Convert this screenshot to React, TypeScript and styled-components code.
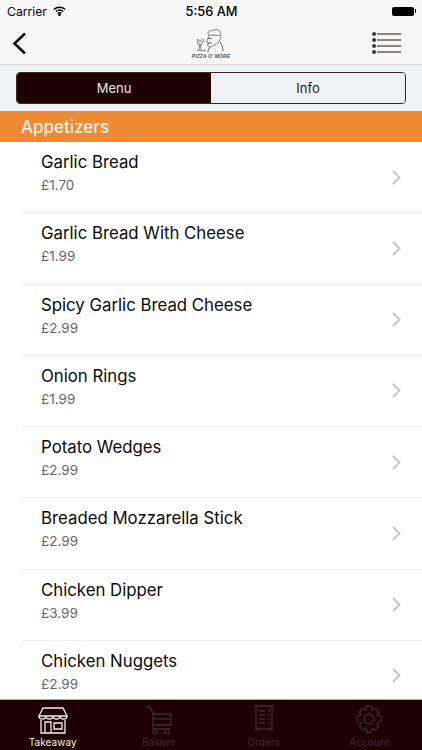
import styled, { createGlobalStyle } from 'styled-components';

const items = [
  { name: 'Garlic Bread', price: '£1.70' },
  { name: 'Garlic Bread With Cheese', price: '£1.99' },
  { name: 'Spicy Garlic Bread Cheese', price: '£2.99' },
  { name: 'Onion Rings', price: '£1.99' },
  { name: 'Potato Wedges', price: '£2.99' },
  { name: 'Breaded Mozzarella Stick', price: '£2.99' },
  { name: 'Chicken Dipper', price: '£3.99' },
  { name: 'Chicken Nuggets', price: '£2.99' },
];

const Global = createGlobalStyle`
  html, body { margin: 0; padding: 0; height: 100%; overflow: hidden; }
  body { font-family: Inter, "Liberation Sans", sans-serif; background: #fff; }
`;

const Page = styled.div`
  width: 422px;
  height: 750px;
  display: flex;
  flex-direction: column;
  overflow: hidden;
`;

const Header = styled.div`
  background: #f7f7f7;
  border-bottom: 1px solid #d9d9d9;
  height: 65px;
  box-sizing: border-box;
  flex-shrink: 0;
`;

const StatusBar = styled.div`
  height: 22px;
  display: grid;
  grid-template-columns: 1fr auto 1fr;
  align-items: center;
  padding: 0 6px 0 7px;
  color: #000;
`;

const Carrier = styled.div`
  display: flex;
  align-items: center;
  gap: 6px;
  font-size: 12.2px;
`;

const Clock = styled.div`
  font-size: 12.8px;
  font-weight: 500;
`;

const BatteryWrap = styled.div`
  display: flex;
  justify-content: flex-end;
  align-items: center;
`;

const Battery = styled.div`
  width: 22px;
  height: 9px;
  border-radius: 2px;
  background: #000;
`;

const BatteryTip = styled.div`
  width: 1.5px;
  height: 4px;
  background: #000;
  margin-left: 0.5px;
`;

const NavBar = styled.div`
  height: 42px;
  display: grid;
  grid-template-columns: 1fr auto 1fr;
  align-items: center;
  padding: 0 21px 0 12px;
`;

const NavEnd = styled.div`
  display: flex;
  justify-content: flex-end;
`;

const NavStart = styled.div`
  display: flex;
  justify-content: flex-start;
`;

const Logo = styled.div`
  display: flex;
  flex-direction: column;
  align-items: center;
  margin-left: 9px;
  margin-top: 1px;
`;

const LogoText = styled.div`
  font-family: "Liberation Sans", sans-serif;
  font-size: 5px;
  line-height: 6px;
  letter-spacing: 0.1px;
  font-style: italic;
  color: #555;
  font-weight: 700;
  white-space: nowrap;
`;

const SegmentArea = styled.div`
  height: 46px;
  background: #eff2f3;
  box-sizing: border-box;
  padding: 7px 16px 0 16px;
  flex-shrink: 0;
`;

const Segments = styled.div`
  height: 32px;
  box-sizing: border-box;
  display: grid;
  grid-template-columns: 194px 1fr;
  border: 1px solid #3a2426;
  border-radius: 4px;
  overflow: hidden;
`;

const Segment = styled.div<{ $active?: boolean }>`
  display: flex;
  align-items: center;
  justify-content: center;
  font-size: 13px;
  background: ${(p) => (p.$active ? '#1e0002' : '#eef1f3')};
  color: ${(p) => (p.$active ? '#e8e4e4' : '#2a1a1a')};
`;

const SectionHeader = styled.div`
  height: 31px;
  background: #ee8a33;
  color: #fdf3e8;
  font-size: 17px;
  font-weight: 500;
  display: flex;
  align-items: center;
  padding-left: 21px;
  flex-shrink: 0;
`;

const List = styled.div`
  flex: 1;
  min-height: 0;
  overflow: hidden;
  padding-left: 21px;
`;

const Row = styled.div`
  height: 71.25px;
  box-sizing: border-box;
  border-bottom: 1px solid #ececec;
  display: flex;
  align-items: center;
  justify-content: space-between;
  padding: 0 21px 0 20px;
`;

const RowText = styled.div`
  display: flex;
  flex-direction: column;
  gap: 4px;
  margin-top: -9px;
`;

const ItemName = styled.div`
  font-size: 16.8px;
  line-height: 21px;
  color: #0a0a0a;
`;

const ItemPrice = styled.div`
  font-size: 13.5px;
  line-height: 16px;
  color: #666;
`;

const TabBar = styled.div`
  height: 51px;
  background: #1e0002;
  border-top: 1px solid #b5b0b0;
  box-sizing: border-box;
  display: grid;
  grid-template-columns: repeat(4, 1fr);
  flex-shrink: 0;
`;

const Tab = styled.div<{ $active?: boolean }>`
  display: flex;
  flex-direction: column;
  align-items: center;
  padding-top: 5px;
  color: ${(p) => (p.$active ? '#f2eeee' : '#3f2c2d')};
`;

const TabIcon = styled.svg`
  width: 32px;
  height: 30px;
  margin-bottom: 1px;
  fill: none;
  stroke: currentColor;
  stroke-width: 1.3;
`;

const TabLabel = styled.div`
  font-size: 10px;
  line-height: 12px;
  letter-spacing: 0.05px;
`;

function ChefLogo() {
  return (
    <svg width="38" height="24" viewBox="0 0 38 24" fill="none" stroke="#4a4a4a" strokeWidth="0.7">
      <path d="M16 4c1-2 3-3 5-2.500 2-1.500 6-1 7 1 1.500 1.500.5 3.500-1.500 4l-8-.5c-1.500-.5-3-1-2.500-2z" />
      <path d="M17 6c-.5 2-1.500 4-2.500 7l2 1-1 2.500 3 1.500 4-2c3-1 6-4 6.500-10" />
      <path d="M16 9.500h3.500M16 14h4M18 18c-1 1-2 3-2 5M28 13c2 3 3 6 3 9" strokeWidth="0.9" />
      <path d="M5 10l1 5 2 1 2-1 2-5M7.500 16l-.5 5M8.500 16l.5 5M6 10l2 3M10 10l-2 3" />
      <path d="M5 21c3 1 6 1 9 0" />
    </svg>
  );
}

function MenuIcon() {
  return (
    <svg width="29" height="22" viewBox="0 0 29 22" fill="none">
      {[2, 8, 14, 20].map((y) => (
        <g key={y}>
          <rect x="0.6" y={y - 1.4} width="3" height="2.8" rx="0.6" fill="#3a2426" stroke="#3a2426" strokeWidth="0.5" />
          <line x1="5" y1={y} x2="29" y2={y} stroke="#3a2426" strokeWidth="1.1" />
        </g>
      ))}
    </svg>
  );
}

function Chevron() {
  return (
    <svg width="9" height="15" viewBox="0 0 9 15" fill="none">
      <path d="M1 1l6.500 6.500L1 14" stroke="#c4c4c8" strokeWidth="1.8" />
    </svg>
  );
}

export default function App() {
  return (
    <Page>
      <Global />
      <Header>
        <StatusBar>
          <Carrier>
            Carrier
            <svg width="13" height="10" viewBox="0 0 13 10" fill="none" stroke="#000" strokeWidth="1.4">
              <path d="M.8 3.500c3.300-3 8.100-3 11.400 0M2.800 5.600c2.200-2 5.200-2 7.400 0M4.700 7.500c1-1 2.600-1 3.600 0" />
              <circle cx="6.500" cy="8.800" r="0.6" fill="#000" />
            </svg>
          </Carrier>
          <Clock>5:56 AM</Clock>
          <BatteryWrap>
            <Battery />
            <BatteryTip />
          </BatteryWrap>
        </StatusBar>
        <NavBar>
          <NavStart>
            <svg width="15" height="23" viewBox="0 0 15 23" fill="none">
              <path d="M13 1.500L2.500 11.500 13 21.500" stroke="#111" strokeWidth="2.6" />
            </svg>
          </NavStart>
          <Logo>
            <ChefLogo />
            <LogoText>PIZZA O' MORE</LogoText>
          </Logo>
          <NavEnd>
            <MenuIcon />
          </NavEnd>
        </NavBar>
      </Header>
      <SegmentArea>
        <Segments>
          <Segment $active>Menu</Segment>
          <Segment>Info</Segment>
        </Segments>
      </SegmentArea>
      <SectionHeader>Appetizers</SectionHeader>
      <List>
        {items.map((item) => (
          <Row key={item.name}>
            <RowText>
              <ItemName>{item.name}</ItemName>
              <ItemPrice>{item.price}</ItemPrice>
            </RowText>
            <Chevron />
          </Row>
        ))}
      </List>
      <TabBar>
        <Tab $active>
          <TabIcon viewBox="0 0 32 30">
            <path d="M6 3h20l4 8H2z" />
            <path d="M2 11c0 4 7 4 7 0 0 4 7 4 7 0 0 4 7 4 7 0 0 4 7 4 7 0" />
            <path d="M4 15v13h24V15M8 28V17h6v11M17 18h8v6h-8z" />
          </TabIcon>
          <TabLabel>Takeaway</TabLabel>
        </Tab>
        <Tab>
          <TabIcon viewBox="0 0 32 30">
            <path d="M4 2h4l3 6v16h17M11 9h18v11H11" />
            <path d="M11 14h18" />
            <circle cx="13" cy="26.500" r="2.200" />
            <circle cx="25" cy="26.500" r="2.200" />
          </TabIcon>
          <TabLabel>Basket</TabLabel>
        </Tab>
        <Tab>
          <TabIcon viewBox="0 0 32 30">
            <path d="M6 1h20M8 1v24l3-2 2.500 2 2.500-2 2.500 2 2.500-2 3 2V1" />
            <path d="M11 6h6M11 10h6M11 14h6M11 18h6M20 6h2M20 10h2M20 14h2M20 18h2" />
          </TabIcon>
          <TabLabel>Orders</TabLabel>
        </Tab>
        <Tab>
          <TabIcon viewBox="0 0 32 30">
            <circle cx="16" cy="14" r="5" />
            <path d="M13.500 1h5l1 4 3-1.500 3.500 3.500L24 10l4 1.500v5L24 18l1.500 3.500L22 25l-3-1.500-1 4h-4l-1-4-3 1.500-3.500-3.500L8 18l-4-1.500v-5L8 10 6.500 7 10 3.500 13 5z" />
          </TabIcon>
          <TabLabel>Account</TabLabel>
        </Tab>
      </TabBar>
    </Page>
  );
}
